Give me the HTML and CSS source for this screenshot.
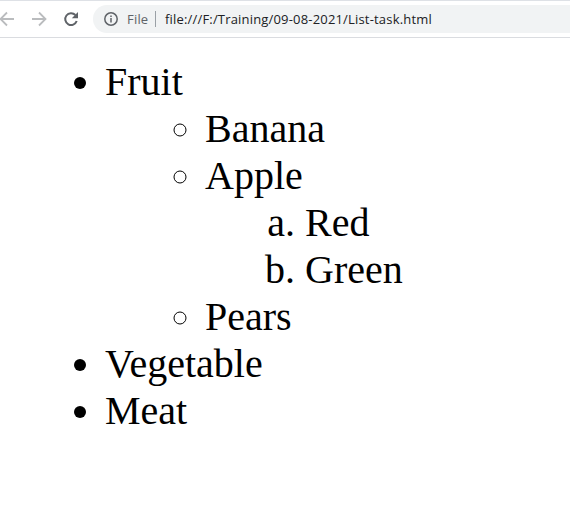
FILE: index.html
```html
<!DOCTYPE html>
<html lang="en">
<head>
<meta charset="utf-8">
<title>List-task.html</title>
<link rel="stylesheet" href="styles.css">
</head>
<body>
<header class="toolbar">
  <svg class="nav" width="93" height="34" viewBox="0 0 93 34" fill="none">
    <path class="arrow" d="M14 16H1M7 9.5L.5 16L7 22.5"/>
    <path class="arrow" d="M32 16H45M39 9.5L45.5 16L39 22.5"/>
    <path class="reload" d="M75.4 12A5.9 5.9 0 1 0 76.7 18"/>
    <path class="reload-tip" d="M78 9V15.2H71.8Z"/>
  </svg>
  <div class="address">
    <svg class="info" width="14" height="14" viewBox="0 0 14 14" fill="none">
      <circle cx="7" cy="7" r="6.2"/>
      <path d="M7 6V10.4M7 3.5V5"/>
    </svg>
    <span class="scheme">File</span>
    <span class="divider"></span>
    <span class="url">file:///F:/Training/09-08-2021/List-task.html</span>
  </div>
</header>
<main class="page">
  <ul>
    <li>Fruit
      <ul>
        <li>Banana</li>
        <li>Apple
          <ol>
            <li>Red</li>
            <li>Green</li>
          </ol>
        </li>
        <li>Pears</li>
      </ul>
    </li>
    <li>Vegetable</li>
    <li>Meat</li>
  </ul>
</main>
</body>
</html>
```
FILE: styles.css
```css
body {
  margin: 0;
  background: #fff;
  color: #000;
  overflow: hidden;
}

.toolbar {
  box-sizing: border-box;
  display: flex;
  height: 38px;
  padding-top: 2px;
  border-top: 1px solid #dee1e6;
  border-bottom: 1px solid #dadce0;
  font: 13px/28px "Open Sans", sans-serif;
}

.nav {
  flex: none;
}

.arrow {
  stroke: #babcbe;
  stroke-width: 1.8;
}

.reload {
  stroke: #5f6368;
  stroke-width: 2;
}

.reload-tip {
  fill: #5f6368;
}

.address {
  display: flex;
  flex: 1;
  align-items: center;
  height: 28px;
  margin-top: 2px;
  padding-left: 11px;
  border-radius: 14px 0 0 14px;
  background: #f1f3f4;
  white-space: nowrap;
}

.info {
  flex: none;
  stroke: #5f6368;
  stroke-width: 1.5;
}

.scheme {
  width: 28px;
  margin-left: 9px;
  color: #5f6368;
  letter-spacing: 0.2px;
}

.divider {
  width: 1px;
  height: 16px;
  background: #9aa0a6;
}

.url {
  margin-left: 9px;
  color: #202124;
  letter-spacing: 0.18px;
}

.page {
  padding: 20px 0 0 5px;
  font: 40px/47px "Liberation Serif", serif;
}

ul,
ol {
  margin: 0;
  padding-left: 100px;
}

ol {
  list-style-type: lower-alpha;
}
```
